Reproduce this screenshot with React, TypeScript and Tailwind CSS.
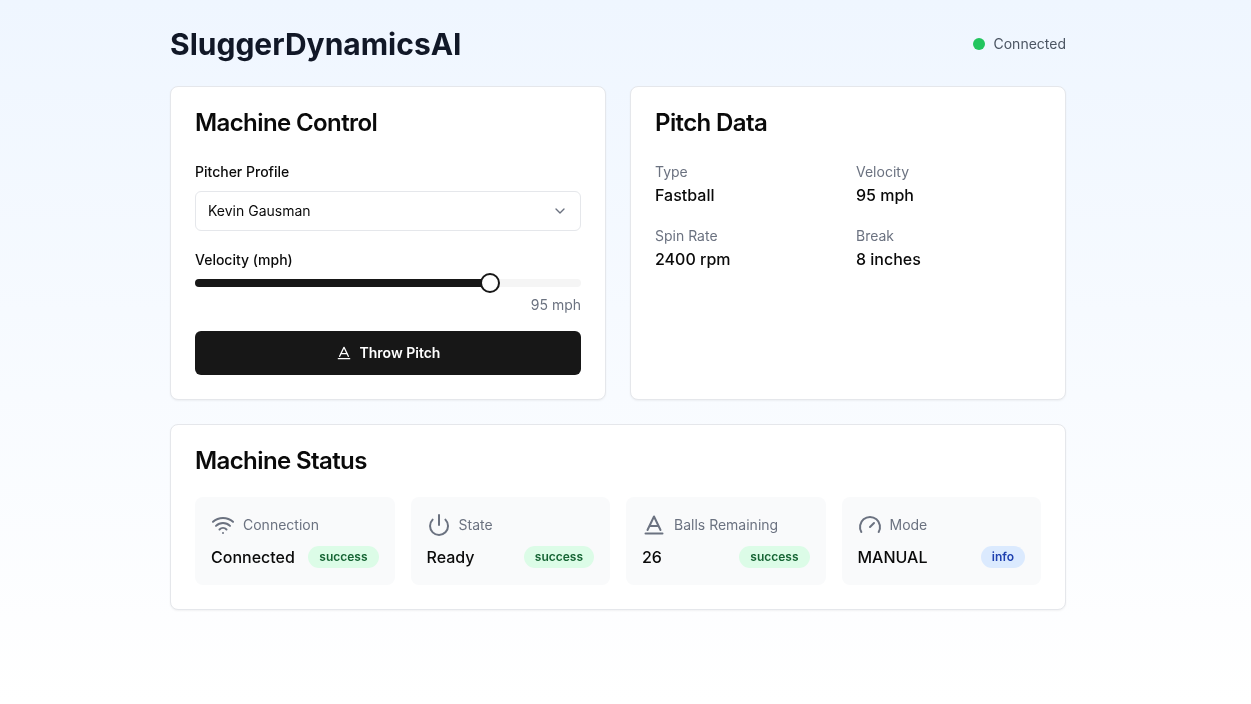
import React from 'react';
import { ChevronDown, Gauge, Power, Wifi } from 'lucide-react';
import clsx from 'clsx';

const BallIcon = ({ className }: { className?: string }) => (
  <svg viewBox="0 0 24 24" fill="none" stroke="currentColor" strokeWidth="2" strokeLinecap="round" strokeLinejoin="round" className={className}>
    <path d="M5.5 17 L12 3.5 L18.5 17" />
    <path d="M8 13 H16" />
    <path d="M3.5 20.5 H20.5" />
  </svg>
);

const pitchData = [
  { label: 'Type', value: 'Fastball' },
  { label: 'Velocity', value: '95 mph' },
  { label: 'Spin Rate', value: '2400 rpm' },
  { label: 'Break', value: '8 inches' },
];

const statusItems = [
  { label: 'Connection', value: 'Connected', badge: 'success', icon: Wifi },
  { label: 'State', value: 'Ready', badge: 'success', icon: Power },
  { label: 'Balls Remaining', value: '26', badge: 'success', icon: BallIcon },
  { label: 'Mode', value: 'MANUAL', badge: 'info', icon: Gauge },
];

const Card = ({ className, children }: { className?: string; children: React.ReactNode }) => (
  <div className={clsx('rounded-lg border border-[#e5e7eb] bg-white p-6 shadow-[0_1px_2px_0_rgba(0,0,0,0.05)]', className)}>{children}</div>
);

export default function App() {
  return (
    <div className="min-h-screen bg-gradient-to-b from-[#eff6ff] to-white pr-[15px] font-['Inter',sans-serif] text-[#0a0a0a] will-change-transform">
      <div className="mx-auto max-w-[896px] pt-6">
        <header className="mb-[22px] flex h-10 items-center justify-between">
          <h1 className="text-3xl font-bold text-[#111827]">SluggerDynamicsAI</h1>
          <div className="flex items-center gap-2">
            <span className="h-3 w-3 rounded-full bg-[#22c55e]" />
            <span className="text-sm text-[#4b5563]">Connected</span>
          </div>
        </header>

        <div className="mb-6 grid grid-cols-2 gap-6">
          <Card>
            <h2 className="mb-[27px] text-2xl leading-none font-semibold tracking-tight">Machine Control</h2>
            <label className="mb-[9px] block text-sm font-medium">Pitcher Profile</label>
            <div className="mb-[19px] flex h-10 items-center justify-between rounded-md border border-[#e5e7eb] bg-white px-3 text-sm">
              Kevin Gausman
              <ChevronDown className="h-4 w-4 text-[#6b7280]" />
            </div>
            <label className="mb-[9px] block text-sm font-medium">Velocity (mph)</label>
            <div className="relative h-2 rounded-full bg-[#f5f5f5]">
              <div className="h-2 w-[76.5%] rounded-full bg-[#171717]" />
              <div className="absolute top-[-6px] left-[285px] h-5 w-5 rounded-full border-2 border-[#171717] bg-white" />
            </div>
            <div className="mt-2 mb-4 text-right text-sm text-[#6b7280]">95 mph</div>
            <button className="flex h-11 w-full items-center justify-center gap-2 rounded-md bg-[#171717] text-sm font-semibold text-white">
              <BallIcon className="h-4 w-4" />
              Throw Pitch
            </button>
          </Card>

          <Card>
            <h2 className="mb-[27px] text-2xl leading-none font-semibold tracking-tight">Pitch Data</h2>
            <div className="grid grid-cols-2 gap-x-4 gap-y-[19px]">
              {pitchData.map((d) => (
                <div key={d.label}>
                  <div className="mb-px text-sm text-[#6b7280]">{d.label}</div>
                  <div className="font-medium">{d.value}</div>
                </div>
              ))}
            </div>
          </Card>
        </div>

        <Card>
          <h2 className="mb-6 text-2xl leading-none font-semibold tracking-tight">Machine Status</h2>
          <div className="grid grid-cols-4 gap-4">
            {statusItems.map((s) => {
              const Icon = s.icon;
              return (
                <div key={s.label} className="rounded-lg bg-[#f9fafb] p-4">
                  <div className="mb-2 flex items-center gap-2">
                    <Icon className="h-6 w-6 text-[#6b7280]" />
                    <span className="text-sm text-[#6b7280]">{s.label}</span>
                  </div>
                  <div className="flex items-center justify-between">
                    <span className="font-medium">{s.value}</span>
                    <span
                      className={clsx(
                        'rounded-full px-[11px] py-0.5 text-xs leading-[18px] font-semibold',
                        s.badge === 'info' ? 'bg-[#dbeafe] text-[#1e40af]' : 'bg-[#dcfce7] text-[#166534]',
                      )}
                    >
                      {s.badge}
                    </span>
                  </div>
                </div>
              );
            })}
          </div>
        </Card>
      </div>
    </div>
  );
}
